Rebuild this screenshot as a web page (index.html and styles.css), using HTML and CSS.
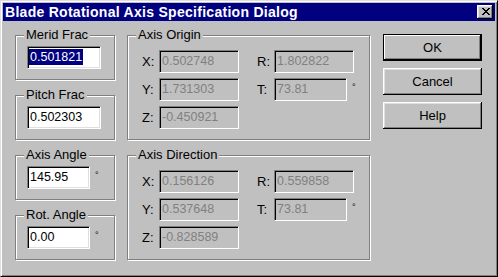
FILE: index.html
```html
<!DOCTYPE html>
<html>
<head>
<meta charset="utf-8">
<link rel="stylesheet" href="styles.css">
</head>
<body>
<div class="window">
  <div class="titlebar">
    <span class="title">Blade Rotational Axis Specification Dialog</span>
    <div class="close">
      <svg width="8" height="7" viewBox="0 0 8 7" shape-rendering="crispEdges">
        <g fill="#000">
          <rect x="0" y="0" width="2" height="1"/><rect x="6" y="0" width="2" height="1"/>
          <rect x="1" y="1" width="2" height="1"/><rect x="5" y="1" width="2" height="1"/>
          <rect x="2" y="2" width="4" height="1"/>
          <rect x="3" y="3" width="2" height="1"/>
          <rect x="2" y="4" width="4" height="1"/>
          <rect x="1" y="5" width="2" height="1"/><rect x="5" y="5" width="2" height="1"/>
          <rect x="0" y="6" width="2" height="1"/><rect x="6" y="6" width="2" height="1"/>
        </g>
      </svg>
    </div>
  </div>
  <div class="body">
    <div class="col-left">
      <div class="group small">
        <div class="legend">Merid Frac</div>
        <div class="single"><div class="field wide"><span class="sel">0.501821</span></div></div>
      </div>
      <div class="group small">
        <div class="legend">Pitch Frac</div>
        <div class="single"><div class="field wide">0.502303</div></div>
      </div>
      <div class="group small">
        <div class="legend">Axis Angle</div>
        <div class="single"><div class="field narrow">145.95</div><span class="deg">°</span></div>
      </div>
      <div class="group small">
        <div class="legend">Rot. Angle</div>
        <div class="single"><div class="field narrow">0.00</div><span class="deg">°</span></div>
      </div>
    </div>
    <div class="col-mid">
      <div class="group big">
        <div class="legend">Axis Origin</div>
        <div class="rows">
          <div class="row"><span class="lab">X:</span><div class="field dis">0.502748</div><span class="lab lab2">R:</span><div class="field dis">1.802822</div></div>
          <div class="row"><span class="lab">Y:</span><div class="field dis">1.731303</div><span class="lab lab2">T:</span><div class="field dis short">73.81</div><span class="deg">°</span></div>
          <div class="row"><span class="lab">Z:</span><div class="field dis">-0.450921</div></div>
        </div>
      </div>
      <div class="group big">
        <div class="legend">Axis Direction</div>
        <div class="rows">
          <div class="row"><span class="lab">X:</span><div class="field dis">0.156126</div><span class="lab lab2">R:</span><div class="field dis">0.559858</div></div>
          <div class="row"><span class="lab">Y:</span><div class="field dis">0.537648</div><span class="lab lab2">T:</span><div class="field dis short">73.81</div><span class="deg">°</span></div>
          <div class="row"><span class="lab">Z:</span><div class="field dis">-0.828589</div></div>
        </div>
      </div>
    </div>
    <div class="col-btn">
      <div class="btn default">OK</div>
      <div class="btn">Cancel</div>
      <div class="btn">Help</div>
    </div>
  </div>
</div>
</body>
</html>
```

FILE: styles.css
```css
html, body {
  margin: 0;
  padding: 0;
  background: #c0c0c0;
}

.window {
  width: 498px;
  height: 277px;
  box-sizing: border-box;
  background: #c0c0c0;
  border: 1px solid;
  border-color: #dfdfdf #000 #000 #dfdfdf;
  box-shadow: inset 1px 1px #fff, inset -1px -1px #808080;
  padding: 2px;
  font-family: "Liberation Sans", Arial, sans-serif;
  font-size: 13px;
  color: #000;
  display: flex;
  flex-direction: column;
}

.titlebar {
  height: 18px;
  background: #000080;
  display: flex;
  align-items: center;
  padding-left: 2px;
  padding-right: 2px;
}

.title {
  flex: 1;
  color: #fff;
  font-weight: bold;
  font-size: 14px;
  letter-spacing: 0.28px;
  line-height: 18px;
  white-space: nowrap;
}

.close {
  width: 16px;
  height: 14px;
  box-sizing: border-box;
  background: #c0c0c0;
  box-shadow: inset -1px -1px #000, inset 1px 1px #fff, inset -2px -2px #808080, inset 2px 2px #dfdfdf;
  display: flex;
  align-items: flex-start;
  justify-content: flex-start;
  padding: 3px 0 0 5px;
}

.close svg {
  display: block;
}

.body {
  display: flex;
  padding: 14px 0 0 12px;
}

.col-left {
  width: 100px;
  display: flex;
  flex-direction: column;
  gap: 15px;
}

.col-mid {
  width: 243px;
  margin-left: 12px;
  display: flex;
  flex-direction: column;
  gap: 15px;
}

.group {
  box-sizing: border-box;
  border: 1px solid #808080;
  box-shadow: inset 1px 1px #fff, 1px 1px #fff;
}

.group.small {
  height: 45px;
}

.group.big {
  height: 105px;
}

.legend {
  display: table;
  height: 15px;
  line-height: 15px;
  margin: -9px 0 -6px 8px;
  padding: 0 2px;
  background: #c0c0c0;
  white-space: nowrap;
}

.single {
  display: flex;
  align-items: flex-start;
  margin: 10px 0 0 11px;
}

.field {
  box-sizing: border-box;
  height: 23px;
  width: 80px;
  background: #fff;
  border: 1px solid;
  border-color: #808080 #fff #fff #808080;
  box-shadow: inset 1px 1px #000, inset -1px -1px #dfdfdf;
  padding: 1px 2px;
  font-size: 12.5px;
  line-height: 19px;
  white-space: nowrap;
  overflow: hidden;
}

.field.wide {
  width: 74px;
}

.field.narrow {
  width: 63px;
}

.field.short {
  width: 73px;
}

.field.dis {
  background: #c0c0c0;
  color: #808080;
  box-shadow: inset 1px 1px #000, inset -1px -1px #c0c0c0;
}

.sel {
  display: inline-block;
  vertical-align: top;
  height: 16px;
  line-height: 16px;
  margin: 1px 0 0 -1px;
  padding: 0 1px;
  background: #000080;
  color: #fff;
}

.deg {
  font-size: 9px;
  line-height: 23px;
  margin-left: 5px;
  position: relative;
  top: -2px;
}

.rows {
  display: flex;
  flex-direction: column;
  gap: 5px;
  padding: 14px 0 0 14px;
}

.row {
  display: flex;
  height: 23px;
}

.lab {
  width: 17px;
  line-height: 23px;
}

.lab2 {
  margin-left: 18px;
}

.col-btn {
  width: 99px;
  margin-left: 13px;
  margin-top: -1px;
  display: flex;
  flex-direction: column;
  gap: 7px;
}

.btn {
  box-sizing: border-box;
  height: 27px;
  display: flex;
  align-items: center;
  justify-content: center;
  padding-bottom: 1px;
  background: #c0c0c0;
  box-shadow: inset -1px -1px #000, inset 1px 1px #fff, inset -2px -2px #808080, inset 2px 2px #dfdfdf;
}

.btn.default {
  border: 1px solid #000;
  box-shadow: inset -1px -1px #000, inset 1px 1px #fff, inset -2px -2px #808080;
}
```
